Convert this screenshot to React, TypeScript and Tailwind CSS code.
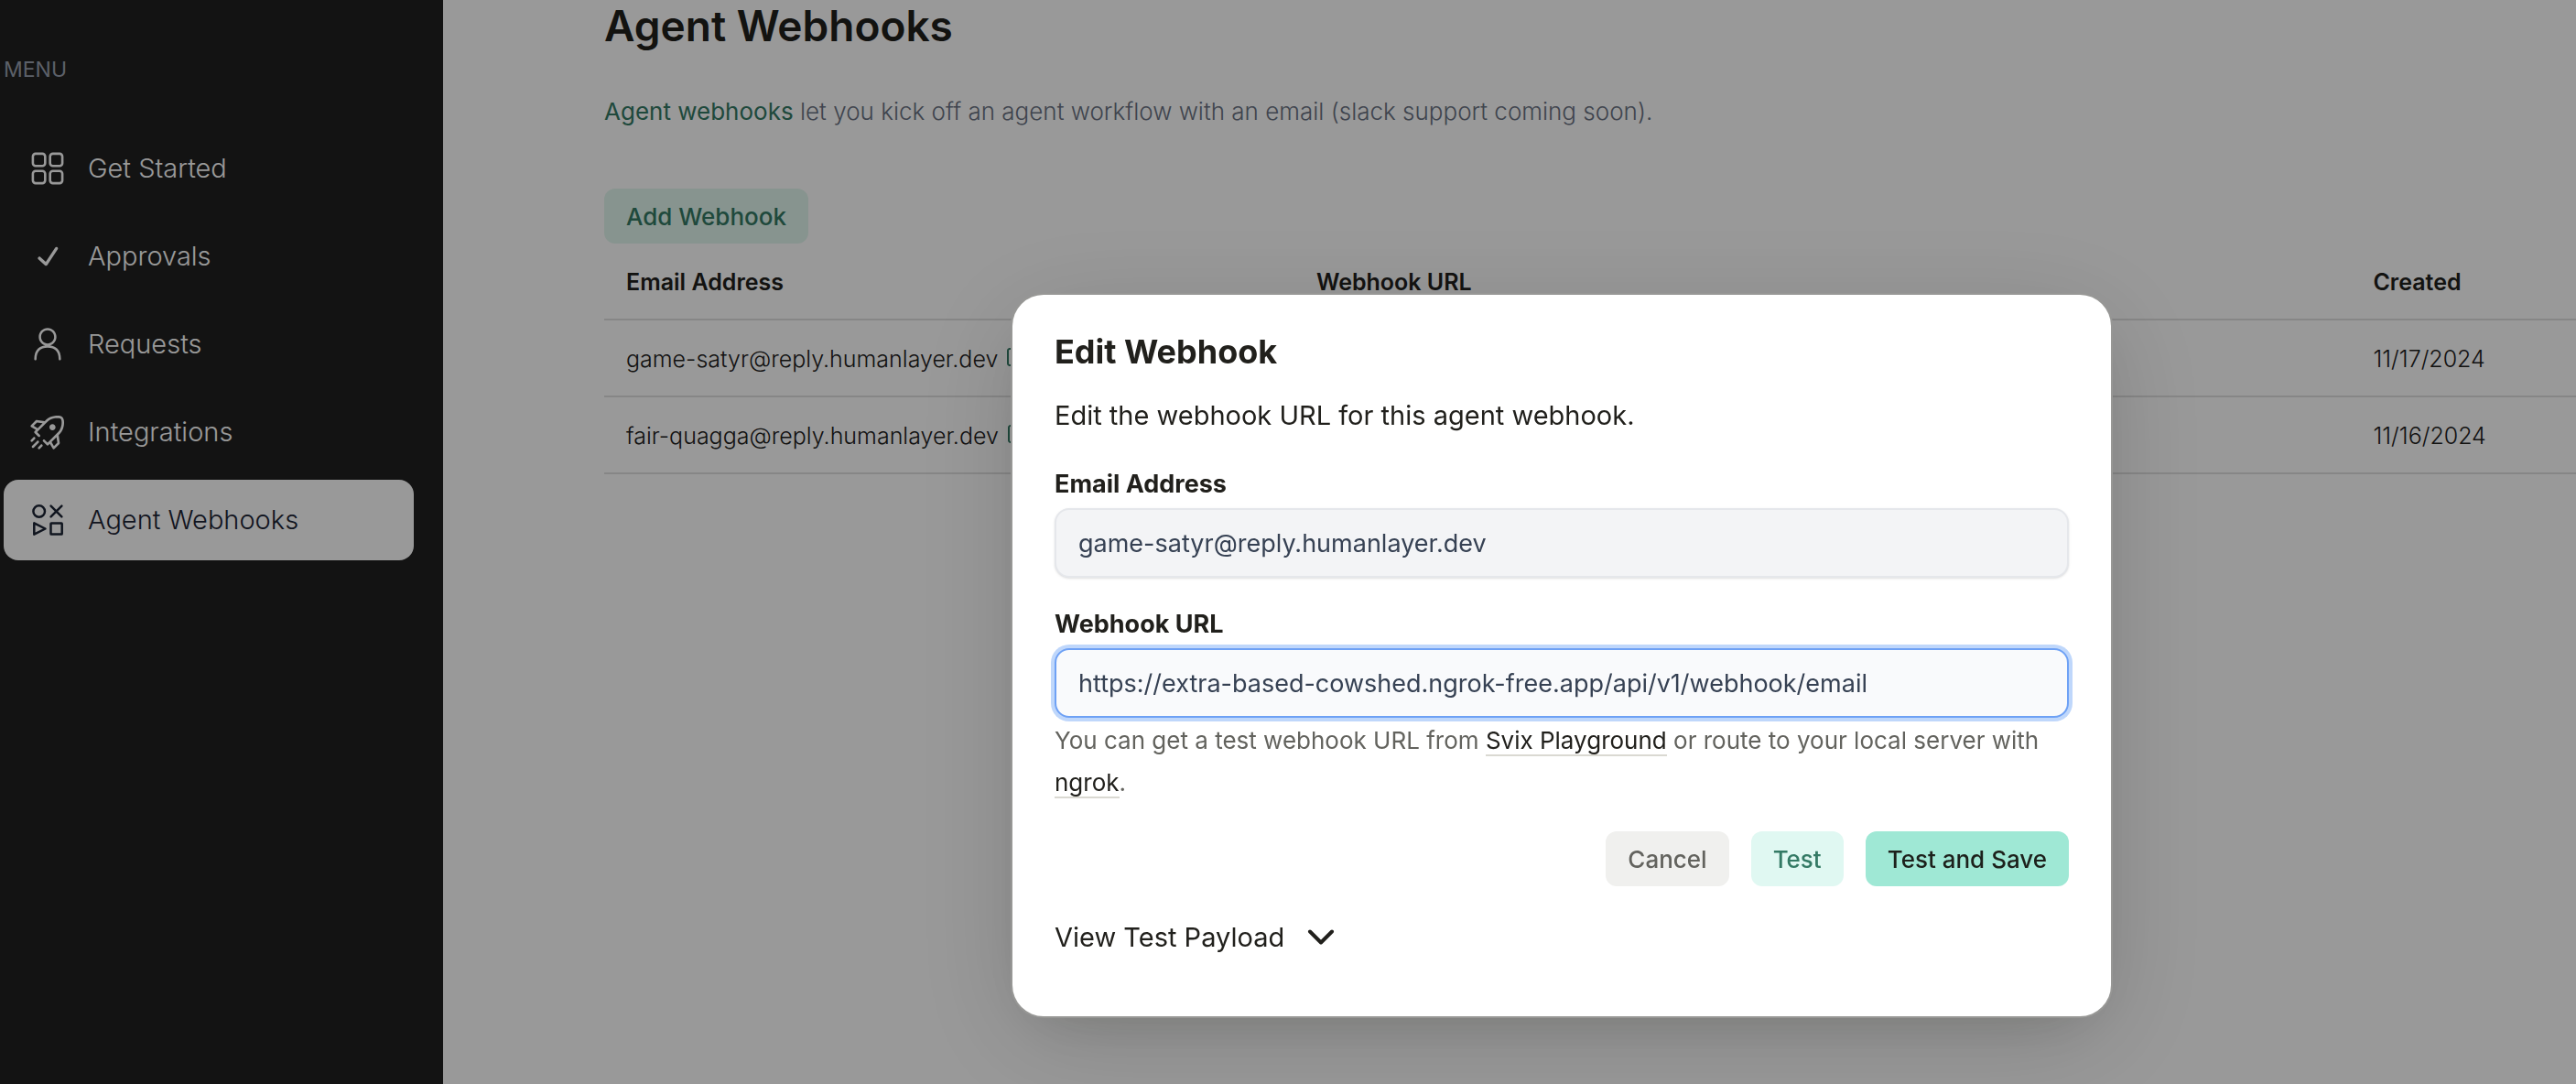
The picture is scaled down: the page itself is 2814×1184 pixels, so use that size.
import type { ReactNode } from "react";
import { RxCheck, RxCopy, RxPerson, RxRocket } from "react-icons/rx";

function GridIcon() {
  return (
    <svg width="40" height="40" viewBox="0 0 40 40" fill="none" stroke="currentColor" strokeWidth="2.6" aria-hidden="true">
      <rect x="3.9" y="3.9" width="13.4" height="13.4" rx="3" />
      <rect x="22.7" y="3.9" width="13.4" height="13.4" rx="3" />
      <rect x="3.9" y="22.7" width="13.4" height="13.4" rx="3" />
      <rect x="22.7" y="22.7" width="13.4" height="13.4" rx="3" />
    </svg>
  );
}

function ShapesIcon() {
  return (
    <svg
      width="40"
      height="40"
      viewBox="0 0 40 40"
      fill="none"
      stroke="currentColor"
      strokeWidth="2.5"
      strokeLinecap="round"
      strokeLinejoin="round"
      aria-hidden="true"
    >
      <circle cx="10.7" cy="10.5" r="6.3" />
      <path d="M23.6 4.6 35.4 16.4M35.4 4.6 23.6 16.4" />
      <path d="M5.3 23.3v12.4l12.2-6.2z" />
      <rect x="23.5" y="23.4" width="12.2" height="12.2" rx="0.6" />
    </svg>
  );
}

const navItems: { label: string; icon: ReactNode; active?: boolean }[] = [
  { label: "Get Started", icon: <GridIcon /> },
  { label: "Approvals", icon: <RxCheck size={40} /> },
  { label: "Requests", icon: <RxPerson size={40} /> },
  { label: "Integrations", icon: <RxRocket size={40} /> },
  { label: "Agent Webhooks", icon: <ShapesIcon />, active: true },
];

const webhooks = [
  { email: "game-satyr@reply.humanlayer.dev", created: "11/17/2024" },
  { email: "fair-quagga@reply.humanlayer.dev", created: "11/16/2024" },
];

function Sidebar() {
  return (
    <aside className="w-[484px] shrink-0 bg-[#202020] pt-15 pr-8 pl-1">
      <h2 className="text-[23px] leading-8 text-gray-400">MENU</h2>
      <nav className="mt-12 flex flex-col gap-2">
        {navItems.map((item) => (
          <a
            key={item.label}
            href="#"
            aria-current={item.active ? "page" : undefined}
            className={
              item.active
                ? "flex h-22 items-center gap-6 rounded-2xl bg-white px-7 text-[29px] font-light text-[#1c2434]"
                : "flex h-22 items-center gap-6 rounded-2xl px-7 text-[29px] font-light text-white"
            }
          >
            {item.icon}
            {item.label}
          </a>
        ))}
      </nav>
    </aside>
  );
}

function WebhookTable() {
  return (
    <table className="w-full table-fixed text-left text-[25px] text-[#21201c]">
      <colgroup>
        <col className="w-[35%]" />
        <col className="w-[53.6%]" />
        <col />
      </colgroup>
      <thead>
        <tr className="h-[83px] border-b-2 border-[#e0e0e0]">
          <th className="px-6 pt-1 font-semibold">Email Address</th>
          <th className="px-6 pt-1 font-semibold">Webhook URL</th>
          <th className="px-6 pt-1 font-semibold">Created</th>
        </tr>
      </thead>
      <tbody>
        {webhooks.map((hook) => (
          <tr key={hook.email} className="h-21 border-b-2 border-[#e0e0e0] font-light">
            <td className="px-6 pt-1">
              <div className="flex items-center gap-2">
                {hook.email}
                <button type="button" aria-label="Copy email address" className="text-[#347a65]">
                  <RxCopy size={30} />
                </button>
              </div>
            </td>
            <td className="px-6" />
            <td className="px-6 pt-1">{hook.created}</td>
          </tr>
        ))}
      </tbody>
    </table>
  );
}

function EditWebhookDialog() {
  return (
    <section
      role="dialog"
      aria-modal="true"
      aria-labelledby="dialog-title"
      className="w-[1200px] rounded-[34px] bg-white px-[46px] pt-[38px] pb-[62px] text-[#21201c] shadow-[0_0_0_2px_#979795,0_24px_120px_rgba(0,0,0,0.15),0_24px_64px_-32px_rgba(40,45,20,0.2)]"
    >
      <h2 id="dialog-title" className="text-4xl leading-12 font-bold">
        Edit Webhook
      </h2>
      <p className="mt-5.5 text-[29px] leading-12">Edit the webhook URL for this agent webhook.</p>
      <form>
        <label htmlFor="email" className="mt-[31px] mb-1.5 block text-[27px] leading-10 font-bold">
          Email Address
        </label>
        <input
          id="email"
          type="email"
          readOnly
          value="game-satyr@reply.humanlayer.dev"
          className="block h-19 w-full rounded-2xl border-2 border-gray-200 bg-gray-100 px-6 text-[27px] text-gray-700 shadow-sm outline-none"
        />
        <label htmlFor="url" className="mt-[31px] mb-1.5 block text-[27px] leading-10 font-bold">
          Webhook URL
        </label>
        <input
          id="url"
          type="url"
          defaultValue="https://extra-based-cowshed.ngrok-free.app/api/v1/webhook/email"
          className="block h-19 w-full rounded-2xl border-2 border-[#6ea1f5] bg-[#f9fafc] px-6 text-[27px] text-gray-700 ring-4 ring-[#bfd7fb] outline-none"
        />
        <p className="mt-0.5 text-[26px] leading-[46px] text-[#63635e]">
          You can get a test webhook URL from{" "}
          <a href="#" className="border-b-2 border-[#dad9d2] text-[#21201c]">
            Svix Playground
          </a>{" "}
          or route to your local server with{" "}
          <a href="#" className="border-b-2 border-[#dad9d2] text-[#21201c]">
            ngrok
          </a>
          .
        </p>
        <div className="mt-[30px] flex justify-end gap-6 text-[26px] font-medium">
          <button type="button" className="h-15 rounded-xl bg-[#f0f0ee] px-6 text-[#63635e]">
            Cancel
          </button>
          <button type="button" className="h-15 rounded-xl bg-[#e0f8f2] px-6 text-[#347a65]">
            Test
          </button>
          <button type="submit" className="h-15 rounded-xl bg-[#9fe8d5] px-6 text-[#1d211c]">
            Test and Save
          </button>
        </div>
      </form>
      <button type="button" aria-expanded="false" className="mt-8 flex items-center gap-6 text-[29px] leading-12">
        View Test Payload
        <svg width="32" height="32" viewBox="0 0 32 32" fill="none" stroke="currentColor" strokeWidth="4" strokeLinecap="round" strokeLinejoin="round" aria-hidden="true">
          <path d="M4 9.5 16 21.5 28 9.5" />
        </svg>
      </button>
    </section>
  );
}

export default function App() {
  return (
    <div className="flex min-h-screen bg-white font-[Inter,sans-serif]">
      <Sidebar />
      <main className="min-w-0 flex-1 pl-44">
        <h1 className="text-[46px] leading-14 font-semibold text-[#21201c]">Agent Webhooks</h1>
        <p className="mt-[46px] text-[26px] leading-10 font-light text-gray-500">
          <a href="#" className="font-normal text-[#347a65]">
            Agent webhooks
          </a>{" "}
          let you kick off an agent workflow with an email (slack support coming soon).
        </p>
        <button type="button" className="mt-16 block h-15 rounded-xl bg-[#e1f7ee] px-6 text-[26px] font-medium text-[#347a65]">
          Add Webhook
        </button>
        <WebhookTable />
      </main>
      <div className="fixed inset-0 flex items-start justify-center overflow-hidden bg-black/40 pt-[322px] pl-[598px]">
        <EditWebhookDialog />
      </div>
    </div>
  );
}
